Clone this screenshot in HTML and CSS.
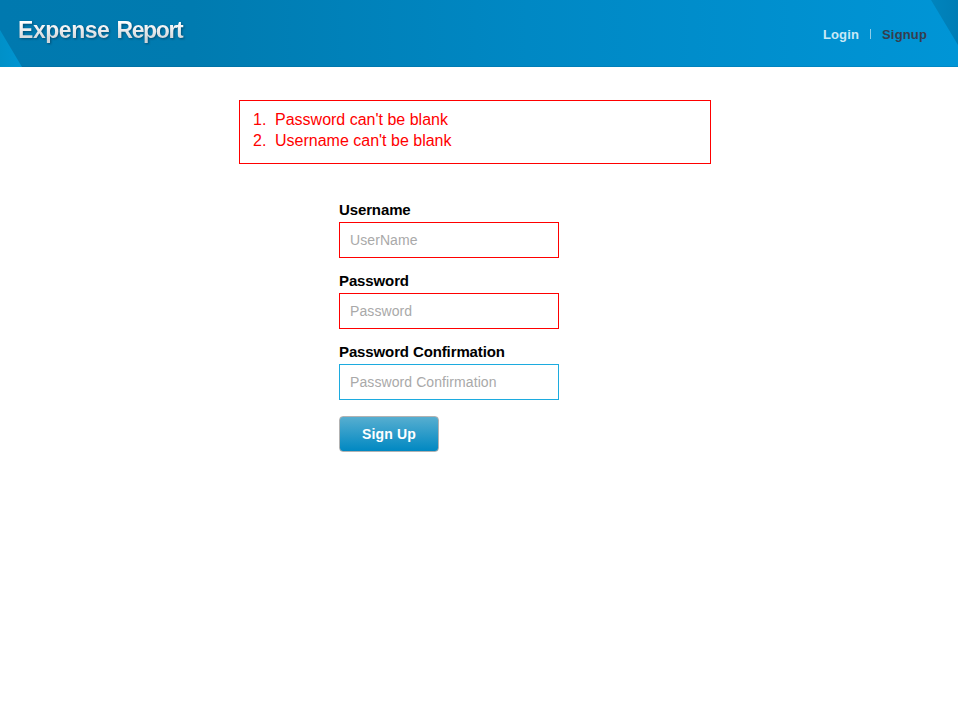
FILE: index.html
```html
<!DOCTYPE html>
<html lang="en">
<head>
<meta charset="utf-8">
<title>Expense Report</title>
<link rel="stylesheet" href="styles.css">
</head>
<body>
<header class="header">
  <svg class="header-corners" width="958" height="67" viewBox="0 0 958 67" aria-hidden="true">
    <defs>
      <linearGradient id="left" x1="0" x2="1"><stop offset="0" stop-color="#0090c8"/><stop offset="1" stop-color="#0095d2"/></linearGradient>
      <linearGradient id="right" x1="0" x2="1"><stop offset="0" stop-color="#0084bd"/><stop offset="1" stop-color="#007db5"/></linearGradient>
    </defs>
    <path d="M0 30L22 67H0Z" fill="url(#left)"/>
    <path d="M931 0H958V45Z" fill="url(#right)"/>
  </svg>
  <h1 class="logo">Expense <span class="logo-tight">Report</span></h1>
  <nav class="nav">
    <a class="nav-link">Login</a>
    <span class="nav-divider"></span>
    <a class="nav-link nav-link-active">Signup</a>
  </nav>
</header>
<main>
  <ol class="errors">
    <li class="error">Password can't be blank</li>
    <li class="error">Username can't be blank</li>
  </ol>
  <form class="form">
    <label class="label" for="username">Username</label>
    <input class="input input-error" id="username" type="text" placeholder="UserName">
    <label class="label" for="password">Password</label>
    <input class="input input-error" id="password" type="password" placeholder="Password">
    <label class="label" for="confirmation">Password Confirmation</label>
    <input class="input" id="confirmation" type="password" placeholder="Password Confirmation">
    <button class="submit" type="button">Sign Up</button>
  </form>
</main>
</body>
</html>
```
FILE: styles.css
```css
* { box-sizing: border-box; }
body {
  margin: 0;
  background: #fff;
  font-family: "Liberation Sans", Arial, sans-serif;
}
.header {
  position: relative;
  display: flex;
  justify-content: space-between;
  height: 67px;
  padding: 0 31px 0 18px;
  background: linear-gradient(90deg, #0079af 0%, #007bb0 20%, #0088c4 55%, #0095d6 100%);
  box-shadow: inset 0 -1px 0 rgba(0, 70, 110, 0.15);
}
.header-corners { position: absolute; inset: 0; }
.logo {
  position: relative;
  margin: 16px 0 0;
  height: 30px;
  padding-right: 2px;
  font-size: 23px;
  line-height: 29px;
  font-weight: 700;
  letter-spacing: -0.45px;
  white-space: nowrap;
  color: transparent;
  background: linear-gradient(#fff 20%, #d0d4d8 80%);
  background-clip: text;
  -webkit-background-clip: text;
  filter: drop-shadow(1px 1px 1px rgba(0, 35, 60, 0.5));
}
.logo-tight { margin-left: 1px; letter-spacing: -1.35px; }
.nav {
  position: relative;
  display: flex;
  height: 16px;
  margin-top: 27px;
}
.nav-link {
  font-size: 13px;
  line-height: 16px;
  font-weight: 700;
  letter-spacing: 0.15px;
  color: #c9e9f6;
}
.nav-link-active { color: #363e4d; }
.nav-divider {
  width: 1px;
  height: 10px;
  margin: 2px 11px 0;
  background: #8fcdea;
}
.errors {
  width: 472px;
  height: 64px;
  margin: 33px 0 0 239px;
  padding: 8px 0 0 13px;
  border: 1px solid #f00;
  color: #f00;
  font-size: 16px;
  line-height: 21px;
  list-style: none;
  counter-reset: error;
}
.error { display: flex; }
.error::before {
  counter-increment: error;
  content: counter(error) ".";
  width: 22px;
}
.form {
  display: flex;
  flex-direction: column;
  width: 220px;
  margin: 37px 0 0 339px;
}
.label {
  height: 21px;
  font-size: 15px;
  line-height: 18px;
  font-weight: 700;
  letter-spacing: -0.12px;
  white-space: nowrap;
  color: #000;
}
.input {
  width: 220px;
  height: 36px;
  margin: 0 0 14px;
  padding: 0 10px;
  border: 1px solid #1cabdf;
  background: #fff;
  font: 14px "Liberation Sans", Arial, sans-serif;
  letter-spacing: 0.09px;
}
.input::placeholder { color: #a9a9a9; opacity: 1; }
.input-error { border-color: #f00; }
.submit {
  width: 100px;
  height: 36px;
  margin-top: 2px;
  padding: 0;
  border: 1px solid #b2b2b2;
  border-radius: 4px;
  background: linear-gradient(#57aed0, #0088c2);
  color: #fff;
  font: 700 14px "Liberation Sans", Arial, sans-serif;
  letter-spacing: 0.15px;
}
```
